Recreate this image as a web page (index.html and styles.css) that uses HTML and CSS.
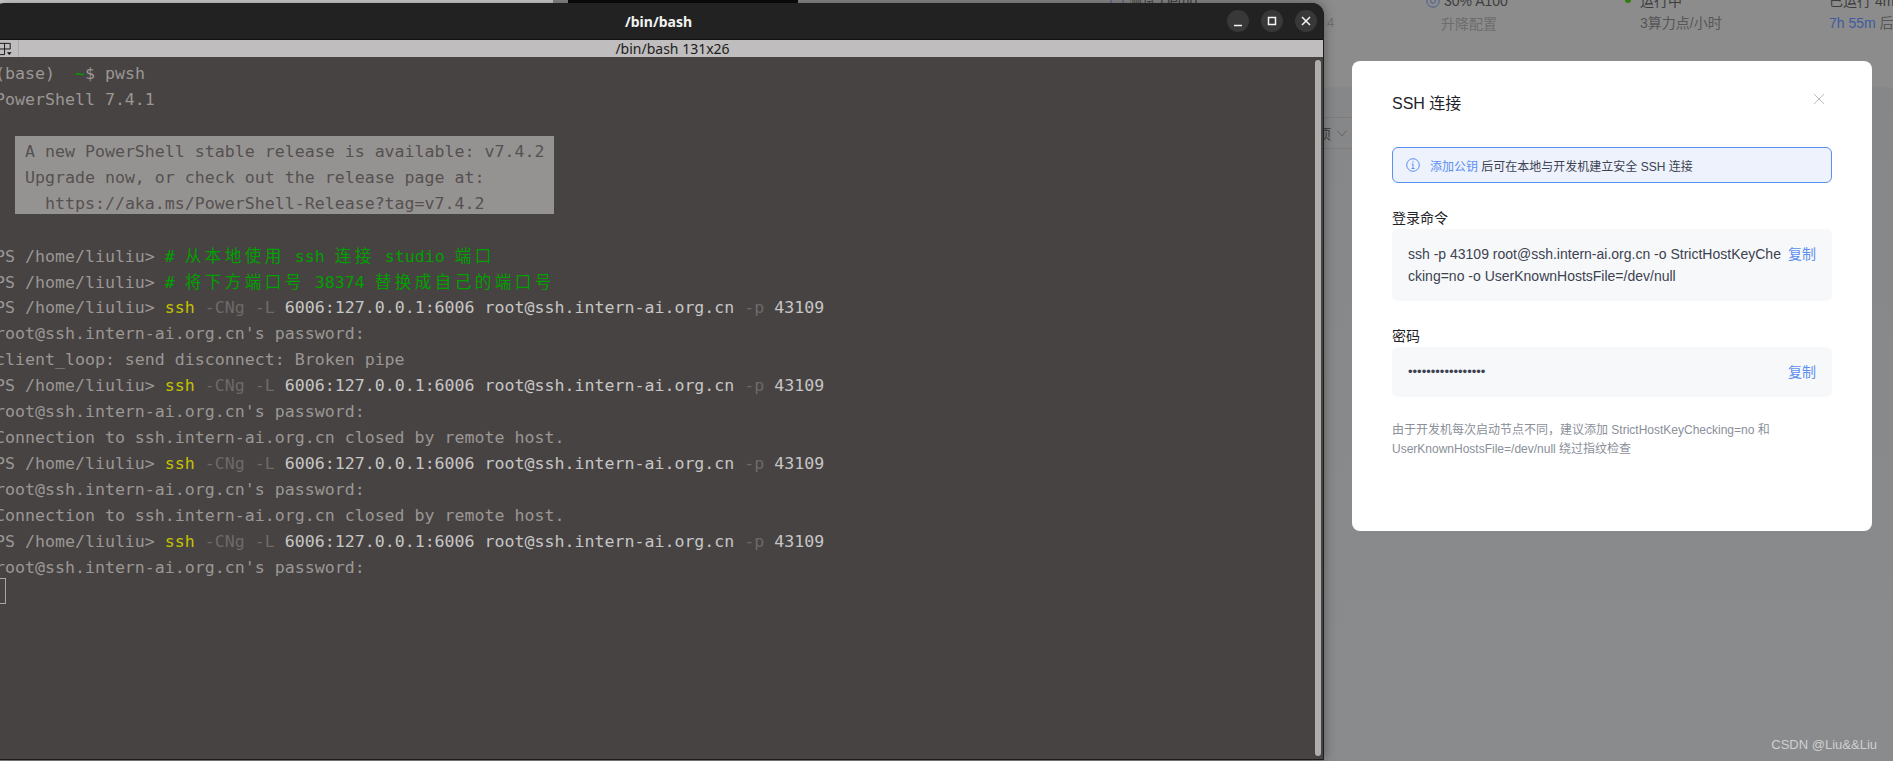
FILE: index.html
```html
<!DOCTYPE html>
<html lang="zh-CN">
<head>
<meta charset="utf-8">
<title>SSH</title>
<link rel="stylesheet" href="styles.css">
</head>
<body>
<div class="desktop">
  <div class="page-behind">
    <div class="top-strip"><span class="strip-light"></span><span class="strip-gap"></span><span class="strip-dark"></span></div>
    <span class="bg-text bg-demo"><svg class="bg-ico" viewBox="0 0 14 14"><circle cx="7" cy="7" r="6.2"/></svg>测试 Demo</span>
    <span class="bg-text bg-spec"><svg class="bg-ico" viewBox="0 0 14 14"><circle cx="7" cy="7" r="6.2"/><circle cx="7" cy="7" r="2.4"/></svg>30% A100</span>
    <span class="bg-text bg-upgrade">升降配置</span>
    <span class="bg-dot"></span>
    <span class="bg-text bg-running">运行中</span>
    <span class="bg-text bg-price">3算力点/小时</span>
    <span class="bg-text bg-uptime">已运行 4m</span>
    <span class="bg-text bg-left"><span class="bg-blue">7h 55m</span> 后自</span>
    <span class="bg-text bg-four">4</span>
    <div class="bg-select"><span>项</span><svg viewBox="0 0 12 12"><path d="M1.500 3.500l4.500 5.500 4.500-5.500"/></svg></div>
  </div>

  <section class="terminal-window">
    <header class="titlebar">
      <span class="title">/bin/bash</span>
      <div class="controls">
        <span class="ctl"><svg viewBox="0 0 22 22"><path d="M7 15.500h8"/></svg></span>
        <span class="ctl"><svg viewBox="0 0 22 22"><rect x="7.500" y="7.500" width="7" height="7"/></svg></span>
        <span class="ctl"><svg viewBox="0 0 22 22"><path d="M7 7l8 8M15 7l-8 8"/></svg></span>
      </div>
    </header>
    <div class="tabbar">
      <span class="tab-ico"><svg viewBox="0 0 16 16"><path d="M1 2.500h12M1 8.500h12M7 2.500v12M13 2.500v6M1 14.500h6M1 2.500v12"/><path class="fill" d="M9.500 12h5l-2.500 3z"/></svg></span>
      <span class="tab-title">/bin/bash 131x26</span>
    </div>
    <div class="term-body">
      <div class="term-lines">
        <div class="ln">(base)  <span class="g">~</span>$ pwsh</div>
        <div class="ln">PowerShell 7.4.1</div>
        <div class="ln"> </div>
        <div class="ln">  <span class="hl"> A new PowerShell stable release is available: v7.4.2 </span></div>
        <div class="ln">  <span class="hl"> Upgrade now, or check out the release page at:       </span></div>
        <div class="ln">  <span class="hl">   https://aka.ms/PowerShell-Release?tag=v7.4.2       </span></div>
        <div class="ln"> </div>
        <div class="ln">PS /home/liuliu&gt; <span class="g"># <span class="cj">从本地使用</span> ssh <span class="cj">连接</span> studio <span class="cj">端口</span></span></div>
        <div class="ln">PS /home/liuliu&gt; <span class="g"># <span class="cj">将下方端口号</span> 38374 <span class="cj">替换成自己的端口号</span></span></div>
        <div class="ln">PS /home/liuliu&gt; <span class="y">ssh</span> <span class="d">-CNg -L</span> <span class="b">6006:127.0.0.1:6006 root@ssh.intern-ai.org.cn</span> <span class="d">-p</span> <span class="b">43109</span></div>
        <div class="ln">root@ssh.intern-ai.org.cn's password:</div>
        <div class="ln">client_loop: send disconnect: Broken pipe</div>
        <div class="ln">PS /home/liuliu&gt; <span class="y">ssh</span> <span class="d">-CNg -L</span> <span class="b">6006:127.0.0.1:6006 root@ssh.intern-ai.org.cn</span> <span class="d">-p</span> <span class="b">43109</span></div>
        <div class="ln">root@ssh.intern-ai.org.cn's password:</div>
        <div class="ln">Connection to ssh.intern-ai.org.cn closed by remote host.</div>
        <div class="ln">PS /home/liuliu&gt; <span class="y">ssh</span> <span class="d">-CNg -L</span> <span class="b">6006:127.0.0.1:6006 root@ssh.intern-ai.org.cn</span> <span class="d">-p</span> <span class="b">43109</span></div>
        <div class="ln">root@ssh.intern-ai.org.cn's password:</div>
        <div class="ln">Connection to ssh.intern-ai.org.cn closed by remote host.</div>
        <div class="ln">PS /home/liuliu&gt; <span class="y">ssh</span> <span class="d">-CNg -L</span> <span class="b">6006:127.0.0.1:6006 root@ssh.intern-ai.org.cn</span> <span class="d">-p</span> <span class="b">43109</span></div>
        <div class="ln">root@ssh.intern-ai.org.cn's password:</div>
        <div class="ln"><span class="cursor"></span></div>
      </div>
      <div class="scrollbar"></div>
    </div>
  </section>

  <section class="modal">
    <div class="modal-head">
      <h2 class="modal-title">SSH 连接</h2>
      <svg class="modal-close" viewBox="0 0 12 12"><path d="M1 1l10 10M11 1L1 11"/></svg>
    </div>
    <div class="alert">
      <svg class="alert-ico" viewBox="0 0 14 14"><circle cx="7" cy="7" r="6.300"/><path d="M5.800 6H7v4.500M5.500 10.500h3M7 3.200v1.300"/></svg>
      <span><a class="link">添加公钥</a> 后可在本地与开发机建立安全 SSH 连接</span>
    </div>
    <div class="field field-cmd">
      <div class="label">登录命令</div>
      <div class="box">
        <div class="val">ssh -p 43109 root@ssh.intern-ai.org.cn -o StrictHostKeyChecking=no -o UserKnownHostsFile=/dev/null</div>
        <a class="link copy">复制</a>
      </div>
    </div>
    <div class="field field-pwd">
      <div class="label">密码</div>
      <div class="box">
        <div class="val dots">•••••••••••••••••</div>
        <a class="link copy">复制</a>
      </div>
    </div>
    <p class="note">由于开发机每次启动节点不同，建议添加 StrictHostKeyChecking=no 和 UserKnownHostsFile=/dev/null 绕过指纹检查</p>
  </section>

  <div class="watermark">CSDN @Liu&amp;&amp;Liu</div>
</div>
</body>
</html>
```

FILE: styles.css
```css
* { box-sizing: border-box; }
html, body { margin: 0; padding: 0; }
body { width: 1893px; height: 761px; overflow: hidden; background: #8a8b8c; }
.desktop { position: relative; width: 1893px; height: 761px; overflow: hidden; background: #8a8b8c; font-family: "Liberation Sans", "Noto Sans CJK SC", sans-serif; }

.page-behind { position: absolute; inset: 0; background: linear-gradient(#8c8c8c 0, #8c8c8c 87px, #868788 88px, #8a8b8c 100%); }
.top-strip { display: flex; height: 3px; width: 798px; }
.strip-light { width: 553px; background: #d4d4d4; }
.strip-gap { width: 15px; background: #8c8c8c; }
.strip-dark { flex: 1; background: #0c0c0c; }
.bg-text { position: absolute; font-size: 14px; line-height: 20px; color: #3d3d3d; white-space: nowrap; }
.bg-demo { left: 1110px; top: -9px; color: #444; display: flex; align-items: center; gap: 4px; }
.bg-spec { left: 1426px; top: -9px; display: flex; align-items: center; gap: 4px; }
.bg-ico { width: 14px; height: 14px; fill: none; stroke: #4d5d8c; stroke-width: 1; }
.bg-upgrade { left: 1441px; top: 14px; color: #6c6c6c; }
.bg-dot { position: absolute; left: 1625px; top: -3px; width: 6px; height: 6px; border-radius: 50%; background: #2f7d0c; }
.bg-running { left: 1640px; top: -9px; }
.bg-price { left: 1640px; top: 13px; color: #565656; }
.bg-uptime { left: 1829px; top: -9px; }
.bg-left { left: 1829px; top: 13px; color: #565656; }
.bg-blue { color: #3f5a9e; }
.bg-four { left: 1327px; top: 13px; font-size: 13px; color: #6e6e6e; }
.bg-select { position: absolute; left: 1300px; top: 117px; width: 90px; height: 32px; border: 1px solid #7c7c7c; border-radius: 3px; display: flex; align-items: center; gap: 5px; padding-left: 16px; font-size: 14px; color: #444; }
.bg-select svg { width: 12px; height: 12px; fill: none; stroke: #666; stroke-width: 1; }

.terminal-window { position: absolute; left: -6px; top: 3px; width: 1330px; height: 757px; display: flex; flex-direction: column; background: #222; border-radius: 12px 12px 0 0; box-shadow: 0 0 12px rgba(0,0,0,.38); border-right: 1px solid #1d1d1d; border-bottom: 1px solid #1d1d1d; overflow: hidden; }
.titlebar { height: 37px; flex: none; position: relative; display: flex; align-items: center; justify-content: center; background: #222; border-bottom: 1px solid #111; }
.title { font-family: "Noto Sans", "Open Sans", sans-serif; font-size: 14px; font-weight: 700; color: #f2f2f2; }
.controls { position: absolute; right: 6px; top: 7px; display: flex; gap: 12px; }
.ctl { width: 22px; height: 22px; border-radius: 50%; background: #383838; display: block; }
.ctl svg { display: block; width: 22px; height: 22px; fill: none; stroke: #f4f4f4; stroke-width: 1.500; }
.tabbar { height: 17px; flex: none; background: #bfbdbd; position: relative; display: flex; align-items: center; justify-content: center; padding-left: 28px; }
.tab-ico { position: absolute; left: 0; top: 0; width: 25px; height: 17px; border-right: 1px solid #aaa; display: flex; justify-content: flex-end; padding-right: 5px; align-items: center; }
.tab-ico svg { width: 15px; height: 15px; fill: none; stroke: #111; stroke-width: 1; }
.tab-ico .fill { fill: #111; stroke: none; }
.tab-title { font-family: "Noto Sans", "Open Sans", sans-serif; font-size: 14px; line-height: 17px; color: #1c1c1c; }
.term-body { flex: 1; position: relative; background: #474342; padding: 1px 0 0 1px; overflow: hidden; }
.term-lines { font-family: "DejaVu Sans Mono", "Noto Sans CJK SC", monospace; font-size: 16.6px; color: #9a9795; }
.ln { height: 26px; line-height: 31px; white-space: pre; }
.g { color: #00a000; }
.y { color: #c2c200; }
.d { color: #6d6a68; }
.b { color: #c6c6c6; }
.cj { font-family: "Noto Sans CJK SC", sans-serif; letter-spacing: 3.400px; }
.hl { display: inline-block; vertical-align: top; height: 26px; overflow: hidden; background: #959392; color: #565050; }
.cursor { display: block; width: 11px; height: 26px; border: 1px solid #a8a5a3; }
.scrollbar { position: absolute; right: 2px; top: 3px; bottom: 3px; width: 6px; border-radius: 3px; background: #b0aeac; }

.modal { position: absolute; left: 1352px; top: 61px; width: 520px; height: 470px; background: #fff; border-radius: 8px; padding: 0 40px; display: flex; flex-direction: column; }
.modal-head { height: 86px; flex: none; display: flex; justify-content: space-between; align-items: flex-start; padding-top: 32px; }
.modal-title { margin: 0; font-size: 16px; line-height: 22px; font-weight: 400; color: #1f2329; }
.modal-close { width: 12px; height: 12px; margin: 0 7px 0 0; fill: none; stroke: #b9bcc0; stroke-width: 1; }
.alert { height: 36px; flex: none; border: 1px solid #5b8ff0; border-radius: 6px; background: #edf2fd; display: flex; align-items: center; gap: 10px; padding: 0 13px; font-size: 12px; color: #3c4250; }
.alert-ico { width: 14px; height: 14px; fill: none; stroke: #5b8ff0; stroke-width: 1; }
.link { color: #5b8ff0; }
.field { flex: none; }
.field-cmd { margin-top: 25px; }
.field-pwd { margin-top: 25px; }
.label { height: 21px; font-size: 14px; line-height: 21px; color: #1f2329; }
.box { background: #f7f8fa; border-radius: 6px; padding: 14px 16px; display: flex; justify-content: space-between; gap: 5px; font-size: 14px; line-height: 22px; color: #3c4250; }
.field-pwd .box { height: 50px; }
.val { flex: 1; min-width: 0; word-break: break-all; }
.dots { font-size: 13px; }
.copy { flex: none; font-size: 14px; }
.note { margin: 24px 0 0; font-size: 12px; line-height: 19px; color: #8a8f99; }

.watermark { position: absolute; right: 16px; bottom: 8px; font-size: 13px; line-height: 16px; color: #d0d0d0; }
```
